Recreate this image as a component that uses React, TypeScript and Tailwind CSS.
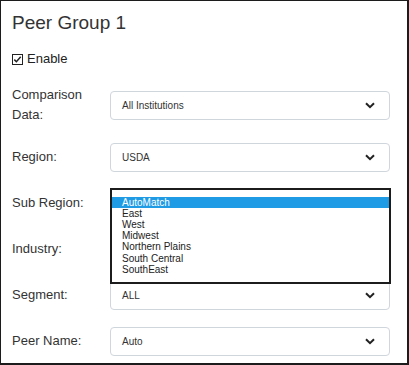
import { ReactNode } from "react";

const font = { fontFamily: '"Liberation Sans", Arial, sans-serif' };

function Chevron() {
  return (
    <svg width="10" height="7" viewBox="0 0 10 7" className="shrink-0">
      <path d="M1 1.2 L5 5.2 L9 1.2" fill="none" stroke="#222" strokeWidth="2" />
    </svg>
  );
}

function Select({ value = "" }: { value?: string }) {
  return (
    <div className="flex h-[29px] w-[280px] items-center justify-between rounded-[4px] border border-[#cfd6dc] bg-white pl-[11px] pr-[14px] text-[10px] text-[#333]">
      <span>{value}</span>
      <Chevron />
    </div>
  );
}

function Row({ label, children, first = false }: { label: ReactNode; children: ReactNode; first?: boolean }) {
  return (
    <div className={`flex h-[46px] items-center ${first ? "mb-[6px]" : ""}`}>
      <div className="w-[98px] text-[13px] leading-[20px] text-[#333]">{label}</div>
      <div className="relative">{children}</div>
    </div>
  );
}

const subRegions = ["AutoMatch", "East", "West", "Midwest", "Northern Plains", "South Central", "SouthEast"];

export default function App() {
  return (
    <div style={font} className="h-[365px] w-[409px] overflow-hidden border-t border-l border-r-2 border-b-2 border-[#1c1c1c] bg-white pl-[11px]">
      <h1 className="pt-[9px] text-[19px] leading-[26px] font-normal text-[#333]">Peer Group 1</h1>
      <div className="mt-[14px] flex items-center gap-[4px] text-[13px] leading-[18px] text-[#222]">
        <svg width="11" height="11" viewBox="0 0 11 11">
          <rect x="0.5" y="0.5" width="10" height="10" fill="white" stroke="#222" />
          <path d="M2.3 5.6 L4.4 7.7 L8.7 2.8" fill="none" stroke="#222" strokeWidth="1.5" />
        </svg>
        <span>Enable</span>
      </div>
      <div className="mt-[14px]">
        <Row first label={<>Comparison<br />Data:</>}>
          <Select value="All Institutions" />
        </Row>
        <Row label="Region:">
          <Select value="USDA" />
        </Row>
        <Row label="Sub Region:">
          <Select />
          <div className="absolute left-0 top-[-1px] z-10 h-[96px] w-[281px] border-2 border-[#1c1c1c] bg-white pt-[7px] text-[10px] leading-[11.2px] text-[#222]">
            {subRegions.map((r, i) => (
              <div key={r} className={`pl-[10px] ${i === 0 ? "bg-[#1f9be6] text-white" : ""}`}>
                {r}
              </div>
            ))}
          </div>
        </Row>
        <Row label="Industry:">
          <Select />
        </Row>
        <Row label="Segment:">
          <Select value="ALL" />
        </Row>
        <Row label="Peer Name:">
          <Select value="Auto" />
        </Row>
      </div>
    </div>
  );
}
